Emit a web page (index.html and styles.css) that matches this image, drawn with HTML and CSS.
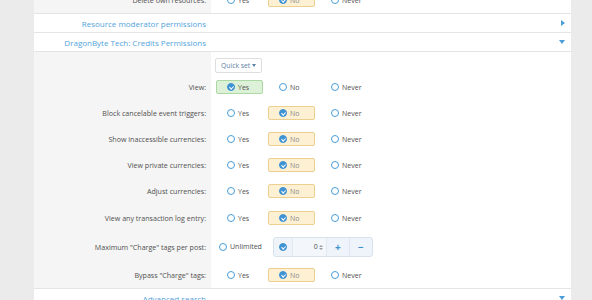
FILE: index.html
```html
<!DOCTYPE html>
<html lang="en">
<head>
  <meta charset="UTF-8">
  <title>Permissions</title>
  <link rel="stylesheet" href="styles.css">
</head>
<body>
  <div class="block">
    <dl class="formRow">
      <dt>Delete own resources:</dt>
      <dd>
        <span class="choice"><i class="radio"></i>Yes</span>
        <span class="choice no"><i class="radio on"></i>No</span>
        <span class="choice"><i class="radio"></i>Never</span>
      </dd>
    </dl>

    <h3 class="blockHeader"><span class="headerText">Resource moderator permissions</span><span class="arrow right"></span></h3>
    <h3 class="blockHeader"><span class="headerText">DragonByte Tech: Credits Permissions</span><span class="arrow down"></span></h3>

    <div class="blockBody">
      <dl class="formRow quickRow">
        <dt></dt>
        <dd><span class="quickSet">Quick set <span class="caret"></span></span></dd>
      </dl>
      <dl class="formRow">
        <dt>View:</dt>
        <dd>
          <span class="choice yes"><i class="radio on"></i>Yes</span>
          <span class="choice"><i class="radio"></i>No</span>
          <span class="choice"><i class="radio"></i>Never</span>
        </dd>
      </dl>
      <dl class="formRow">
        <dt>Block cancelable event triggers:</dt>
        <dd>
          <span class="choice"><i class="radio"></i>Yes</span>
          <span class="choice no"><i class="radio on"></i>No</span>
          <span class="choice"><i class="radio"></i>Never</span>
        </dd>
      </dl>
      <dl class="formRow">
        <dt>Show inaccessible currencies:</dt>
        <dd>
          <span class="choice"><i class="radio"></i>Yes</span>
          <span class="choice no"><i class="radio on"></i>No</span>
          <span class="choice"><i class="radio"></i>Never</span>
        </dd>
      </dl>
      <dl class="formRow">
        <dt>View private currencies:</dt>
        <dd>
          <span class="choice"><i class="radio"></i>Yes</span>
          <span class="choice no"><i class="radio on"></i>No</span>
          <span class="choice"><i class="radio"></i>Never</span>
        </dd>
      </dl>
      <dl class="formRow tallRow">
        <dt>Adjust currencies:</dt>
        <dd>
          <span class="choice"><i class="radio"></i>Yes</span>
          <span class="choice no"><i class="radio on"></i>No</span>
          <span class="choice"><i class="radio"></i>Never</span>
        </dd>
      </dl>
      <dl class="formRow tallRow">
        <dt>View any transaction log entry:</dt>
        <dd>
          <span class="choice"><i class="radio"></i>Yes</span>
          <span class="choice no"><i class="radio on"></i>No</span>
          <span class="choice"><i class="radio"></i>Never</span>
        </dd>
      </dl>
      <dl class="formRow spinRow">
        <dt>Maximum "Charge" tags per post:</dt>
        <dd>
          <span class="unlimited"><i class="radio"></i>Unlimited</span>
          <span class="spinBox">
            <span class="spinCheck"><i class="radio on"></i></span>
            <span class="spinInput">0<span class="spinArrows"><i class="up"></i><i class="down"></i></span></span>
            <span class="spinBtn">+</span>
            <span class="spinBtn">&minus;</span>
          </span>
        </dd>
      </dl>
      <dl class="formRow lastRow">
        <dt>Bypass "Charge" tags:</dt>
        <dd>
          <span class="choice"><i class="radio"></i>Yes</span>
          <span class="choice no"><i class="radio on"></i>No</span>
          <span class="choice"><i class="radio"></i>Never</span>
        </dd>
      </dl>
    </div>

    <h3 class="blockHeader"><span class="headerText">Advanced search</span><span class="arrow down"></span></h3>
  </div>
</body>
</html>
```

FILE: styles.css
```css
body {
  margin: 0;
  background: #ebebeb;
  font-family: "Open Sans", sans-serif;
  color: #505050;
}
.block {
  margin: -13px 21px 0 34px;
  background: #fff;
}
.formRow {
  display: flex;
  margin: 0;
}
.formRow dt {
  width: 177px;
  flex: none;
  box-sizing: border-box;
  background: #f5f5f5;
  text-align: right;
  padding: 6px 5px 6px 0;
  font-size: 7.1px;
  line-height: 14px;
}
.formRow dd {
  flex: 1;
  margin: 0;
  padding: 6px 0 6px 5px;
  display: flex;
  align-items: center;
  gap: 5px;
  font-size: 7px;
}
.block > .formRow {
  border-bottom: 1px solid #e4e4e4;
}
.blockHeader {
  display: flex;
  align-items: center;
  margin: 0;
  height: 18px;
  border-bottom: 1px solid #e4e4e4;
  font-weight: normal;
  font-size: 8px;
  color: #52a4dc;
}
.headerText {
  width: 177px;
  box-sizing: border-box;
  padding-right: 5px;
  text-align: right;
}
.arrow {
  margin-left: auto;
  margin-right: 6px;
  width: 0;
  height: 0;
}
.arrow.right {
  border-left: 4px solid #4a9ed8;
  border-top: 3px solid transparent;
  border-bottom: 3px solid transparent;
}
.arrow.down {
  border-top: 4px solid #4a9ed8;
  border-left: 3.5px solid transparent;
  border-right: 3.5px solid transparent;
}
.blockBody {
  border-bottom: 1px solid #e4e4e4;
}
.quickRow dt,
.quickRow dd {
  padding-top: 6px;
  padding-bottom: 1px;
}
.quickRow dd {
  padding-left: 4px;
}
.quickSet {
  display: inline-flex;
  align-items: center;
  gap: 2px;
  height: 15px;
  box-sizing: border-box;
  padding: 0 5px;
  border: 1px solid #dedede;
  border-radius: 2px;
  background: #fff;
  color: #5e80a6;
  font-size: 6.8px;
}
.caret {
  border-top: 3px solid #5e80a6;
  border-left: 2px solid transparent;
  border-right: 2px solid transparent;
}
.choice {
  display: inline-flex;
  align-items: center;
  gap: 3px;
  width: 47px;
  height: 14px;
  box-sizing: border-box;
  padding-left: 10px;
  border: 1px solid transparent;
  border-radius: 2px;
}
.choice.no {
  background: #fdf0d3;
  border-color: #ecd08f;
  color: #8a8a8a;
}
.choice.yes {
  background: #dcf1d7;
  border-color: #abd8a3;
}
.radio {
  position: relative;
  flex: none;
  width: 8px;
  height: 8px;
  box-sizing: border-box;
  border: 1.2px solid #4a9ed8;
  border-radius: 50%;
}
.radio.on {
  background: #3f93d3;
  border-color: #3f93d3;
}
.radio.on::after {
  content: "";
  position: absolute;
  left: 1.8px;
  top: 0.6px;
  width: 1.6px;
  height: 3.4px;
  border: solid #fff;
  border-width: 0 1.2px 1.2px 0;
  transform: rotate(45deg);
}
.tallRow dt,
.tallRow dd {
  padding-bottom: 7px;
}
.spinRow dt,
.spinRow dd {
  padding-top: 5px;
  padding-bottom: 4px;
  line-height: 20px;
}
.unlimited {
  display: inline-flex;
  align-items: center;
  gap: 3px;
  margin-left: 3px;
  margin-right: 6px;
}
.spinBox {
  display: flex;
  width: 100px;
  height: 20px;
  box-sizing: border-box;
  border: 1px solid #d7e2ec;
  border-radius: 3px;
  background: #eef4fa;
}
.spinCheck {
  width: 19px;
  display: flex;
  align-items: center;
  justify-content: center;
  border-right: 1px solid #dfe7ef;
}
.spinInput {
  width: 34px;
  display: flex;
  align-items: center;
  justify-content: flex-end;
  padding-right: 3px;
  box-sizing: border-box;
  background: #f3f7fb;
  color: #505050;
}
.spinArrows {
  display: flex;
  flex-direction: column;
  gap: 1px;
  margin-left: 1px;
}
.spinArrows i {
  width: 0;
  height: 0;
  border-left: 2px solid transparent;
  border-right: 2px solid transparent;
}
.spinArrows .up {
  border-bottom: 2.5px solid #9a9a9a;
}
.spinArrows .down {
  border-top: 2.5px solid #9a9a9a;
}
.spinBtn {
  width: 23px;
  display: flex;
  align-items: center;
  justify-content: center;
  border-left: 1px solid #dfe7ef;
  color: #3f93d3;
  font-size: 10px;
  font-weight: bold;
}
.lastRow dt,
.lastRow dd {
  padding-top: 7px;
  padding-bottom: 6px;
}
```
